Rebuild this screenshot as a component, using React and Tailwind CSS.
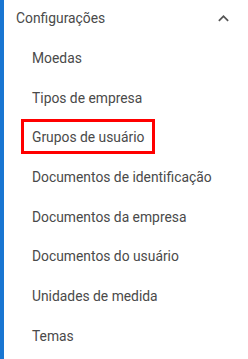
import React from "react";

const items = [
  "Moedas",
  "Tipos de empresa",
  "Grupos de usuário",
  "Documentos de identificação",
  "Documentos da empresa",
  "Documentos do usuário",
  "Unidades de medida",
  "Temas",
];

export default function App() {
  return (
    <div
      className="flex h-[359px] w-[248px] bg-white text-[13.85px] text-[#4a4a4a]"
      style={{ fontFamily: "Roboto, 'Noto Sans', sans-serif" }}
    >
      <div className="w-[4px] shrink-0 bg-[#1976d2]" />
      <div className="relative flex flex-1 flex-col">
        <div className="flex h-[38px] items-center justify-between pb-[3px] pl-[12px] pr-[14px]">
          <span className="leading-5">Configurações</span>
          <svg width="21" height="21" viewBox="0 0 24 24" className="mt-[1px]">
            <path d="M12 8l-6 6 1.41 1.41L12 10.83l4.59 4.58L18 14z" fill="#555" />
          </svg>
        </div>
        {items.map((t, i) => (
          <div key={t} className="relative flex h-[39.7px] items-center pl-[28px]">
            <span className="leading-5">{t}</span>
            {i === 2 && (
              <div className="absolute left-[17px] top-[2px] h-[35px] w-[134px] border-[3px] border-[#ff0000]" />
            )}
          </div>
        ))}
      </div>
    </div>
  );
}
